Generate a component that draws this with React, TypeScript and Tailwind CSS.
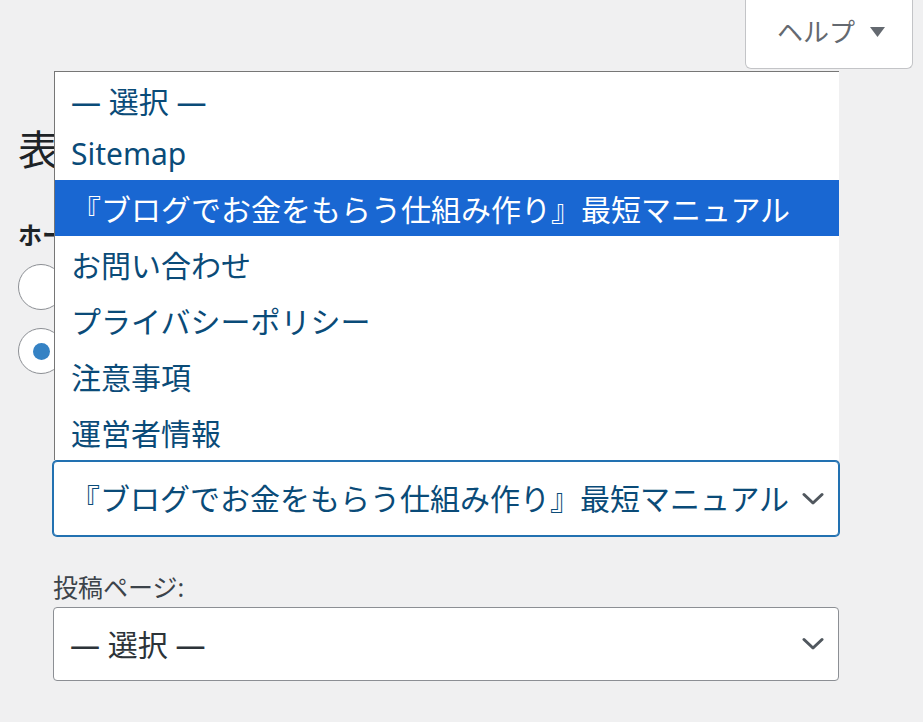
const options = [
  '— 選択 —',
  'Sitemap',
  '『ブログでお金をもらう仕組み作り』最短マニュアル',
  'お問い合わせ',
  'プライバシーポリシー',
  '注意事項',
  '運営者情報',
];

function Chevron() {
  return (
    <svg width="22" height="14" viewBox="0 0 22 14" fill="none">
      <path d="M2 2.5l9 8.5 9-8.5" stroke="#50575e" strokeWidth="3" strokeLinecap="round" strokeLinejoin="round" />
    </svg>
  );
}

function Radio({ checked, label }: { checked?: boolean; label: string }) {
  return (
    <label className="flex items-center gap-[12px] text-[25px] text-[#3c434a]">
      <span className="flex h-[46px] w-[46px] items-center justify-center rounded-full border border-[#8c8f94] bg-white">
        {checked && <span className="h-[17px] w-[17px] rounded-full bg-[#3582c4]" />}
      </span>
      {label}
    </label>
  );
}

function SelectBox({ value, focused }: { value: string; focused?: boolean }) {
  return (
    <div
      className={
        focused
          ? 'flex h-[75px] w-[786px] items-center justify-between rounded-[4px] border border-[#2271b1] bg-white pl-[16px] pr-[14px] text-[30px] text-[#0a4b78] shadow-[0_0_0_1px_#2271b1]'
          : 'flex h-[74px] w-[786px] items-center justify-between rounded-[4px] border border-[#8c8f94] bg-white pl-[16px] pr-[14px] text-[30px] text-[#2c3338]'
      }
    >
      <span className="whitespace-nowrap">{value}</span>
      <Chevron />
    </div>
  );
}

export default function App() {
  return (
    <div
      className="relative h-[722px] w-[923px] overflow-hidden bg-[#f0f0f1]"
      style={{ fontFamily: '"Noto Sans", "Noto Sans CJK JP", sans-serif' }}
    >
      <div className="flex justify-end pr-[10px]">
        <button
          type="button"
          className="flex h-[69px] w-[168px] items-center justify-center gap-[15px] rounded-b-[6px] border border-t-0 border-[#c3c4c7] bg-white pb-[4px] pl-[4px] text-[26px] text-[#646970]"
        >
          ヘルプ
          <svg width="15" height="10" viewBox="0 0 15 10">
            <path d="M0 0h15L7.5 10z" fill="#646970" />
          </svg>
        </button>
      </div>

      <div className="pl-[18px]">
        <h1 className="mt-[60px] text-[41px] leading-none text-[#1d2327]">表示設定</h1>
        <div className="mt-[51px] text-[24px] font-bold leading-[28px] text-[#1d2327]">ホームページの表示</div>
        <div className="mt-[15px] flex flex-col gap-[18px]">
          <Radio label="最新の投稿" />
          <Radio checked label="固定ページ (以下を選択)" />
        </div>

        <div className="pl-[35px]">
          <div className="mt-[40px] text-[25px] leading-[30px] text-[#3c434a]">ホームページ:</div>
          <div className="mt-[17px]">
            <SelectBox focused value="『ブログでお金をもらう仕組み作り』最短マニュアル" />
          </div>
          <div className="mt-[36px] text-[25px] leading-[30px] text-[#3c434a]">投稿ページ:</div>
          <div className="mt-[5px]">
            <SelectBox value="— 選択 —" />
          </div>
        </div>
      </div>

      <ul className="absolute left-[54px] top-[71px] h-[389px] w-[785px] overflow-hidden border-l border-t border-[#767676] bg-white text-[30px] text-[#0a4b78]">
        {options.map((o, i) => (
          <li
            key={o}
            className={
              i === 0
                ? 'flex h-[52px] items-center whitespace-nowrap pl-[16px] pt-[6px]'
                : i === 2
                  ? 'flex h-[56px] items-center whitespace-nowrap bg-[#1967d2] pl-[16px] pt-[2px] text-white'
                  : 'flex h-[56px] items-center whitespace-nowrap pl-[16px] pt-[2px]'
            }
          >
            {o}
          </li>
        ))}
      </ul>
    </div>
  );
}
